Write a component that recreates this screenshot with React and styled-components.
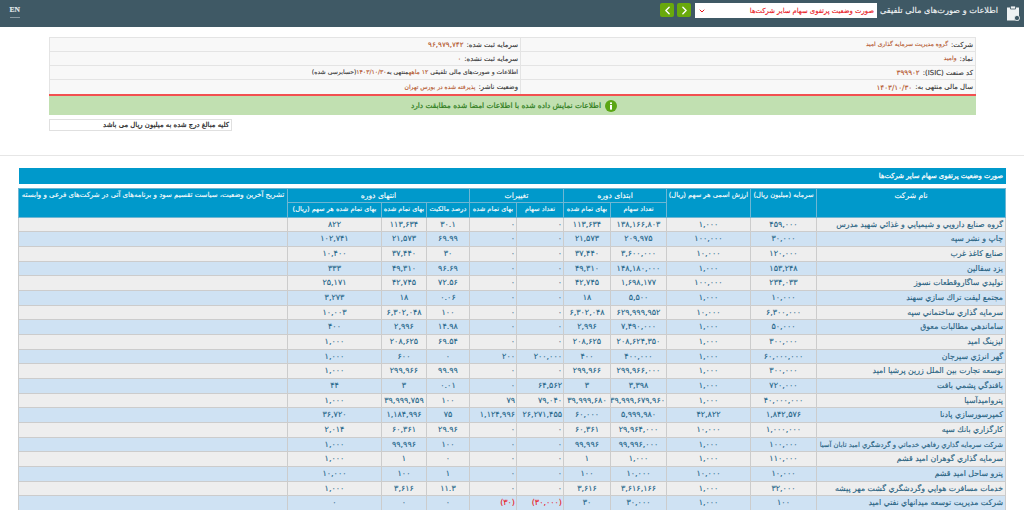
import React from "react";
import styled, { createGlobalStyle } from "styled-components";
import { ChevronLeft, ChevronRight, ChevronDown } from "lucide-react";

const FONT = `"DejaVu Sans", "Liberation Sans", sans-serif`;

const rows = [
  ["گروه صنايع دارويي و شيميايي و غذائي شهيد مدرس", "۴۵۹,۰۰۰", "۱,۰۰۰", "۱۳۸,۱۶۶,۸۰۳", "۱۱۳,۶۳۴", "۰", "۰", "۳۰.۱", "۱۱۳,۶۳۴", "۸۲۲"],
  ["چاپ و نشر سپه", "۳۰,۰۰۰", "۱۰۰,۰۰۰", "۲۰۹,۹۷۵", "۲۱,۵۷۳", "۰", "۰", "۶۹.۹۹", "۲۱,۵۷۳", "۱۰۲,۷۴۱"],
  ["صنايع كاغذ غرب", "۱۲۰,۰۰۰", "۱۰,۰۰۰", "۳,۶۰۰,۰۰۰", "۳۷,۴۴۰", "۰", "۰", "۳۰", "۳۷,۴۴۰", "۱۰,۴۰۰"],
  ["يزد سفالين", "۱۵۳,۲۴۸", "۱,۰۰۰", "۱۴۸,۱۸۰,۰۰۰", "۴۹,۳۱۰", "۰", "۰", "۹۶.۶۹", "۴۹,۳۱۰", "۳۳۳"],
  ["توليدي ساگاروقطعات نسوز", "۲۳۴,۰۳۳", "۱۰۰,۰۰۰", "۱,۶۹۸,۱۷۷", "۴۲,۷۴۵", "۰", "۰", "۷۲.۵۶", "۴۲,۷۴۵", "۲۵,۱۷۱"],
  ["مجتمع ليفت تراك سازي سهند", "۱۰,۰۰۰", "۱,۰۰۰", "۵,۵۰۰", "۱۸", "۰", "۰", "۰.۰۶", "۱۸", "۳,۲۷۳"],
  ["سرمايه گذاري ساختماني سپه", "۶,۳۰۰,۰۰۰", "۱۰,۰۰۰", "۶۲۹,۹۹۹,۹۵۲", "۶,۳۰۲,۰۴۸", "۰", "۰", "۱۰۰", "۶,۳۰۲,۰۴۸", "۱۰,۰۰۳"],
  ["ساماندهي مطالبات معوق", "۵۰,۰۰۰", "۱,۰۰۰", "۷,۴۹۰,۰۰۰", "۲,۹۹۶", "۰", "۰", "۱۴.۹۸", "۲,۹۹۶", "۴۰۰"],
  ["ليزينگ اميد", "۳۰۰,۰۰۰", "۱,۰۰۰", "۲۰۸,۶۲۴,۳۵۰", "۲۰۸,۶۲۵", "۰", "۰", "۶۹.۵۴", "۲۰۸,۶۲۵", "۱,۰۰۰"],
  ["گهر انرژي سيرجان", "۶۰,۰۰۰,۰۰۰", "۱,۰۰۰", "۴۰۰,۰۰۰", "۴۰۰", "۲۰۰,۰۰۰", "۲۰۰", "۰", "۶۰۰", "۱,۰۰۰"],
  ["توسعه تجارت بين الملل زرين پرشيا اميد", "۳۰۰,۰۰۰", "۱,۰۰۰", "۲۹۹,۹۶۶,۰۰۰", "۲۹۹,۹۶۶", "۰", "۰", "۹۹.۹۹", "۲۹۹,۹۶۶", "۱,۰۰۰"],
  ["بافندگي پشمي بافت", "۷۲۰,۰۰۰", "۱,۰۰۰", "۳,۳۹۸", "۳", "۶۴,۵۶۲", "۰", "۰.۰۱", "۳", "۴۴"],
  ["پتروامیدآسیا", "۴۰,۰۰۰,۰۰۰", "۱,۰۰۰", "۳۹,۹۹۹,۶۷۹,۹۶۰", "۳۹,۹۹۹,۶۸۰", "۷۹,۰۴۰", "۷۹", "۱۰۰", "۳۹,۹۹۹,۷۵۹", "۱,۰۰۰"],
  ["كمپرسورسازي پادنا", "۱,۸۴۲,۵۷۶", "۴۲,۸۲۲", "۵,۹۹۹,۹۸۰", "۶۰,۰۰۰", "۲۶,۲۷۱,۴۵۵", "۱,۱۲۴,۹۹۶", "۷۵", "۱,۱۸۴,۹۹۶", "۳۶,۷۲۰"],
  ["كارگزاري بانك سپه", "۱,۰۰۰,۰۰۰", "۱۰,۰۰۰", "۲۹,۹۶۴,۰۰۰", "۶۰,۳۶۱", "۰", "۰", "۲۹.۹۶", "۶۰,۳۶۱", "۲,۰۱۴"],
  ["شركت سرمايه گذاري رفاهي خدماتي و گردشگري اميد تابان آسيا", "۱۰۰,۰۰۰", "۱,۰۰۰", "۹۹,۹۹۶,۰۰۰", "۹۹,۹۹۶", "۰", "۰", "۱۰۰", "۹۹,۹۹۶", "۱,۰۰۰"],
  ["سرمايه گذاري گوهران اميد قشم", "۱۱۰,۰۰۰", "۱,۰۰۰", "۱,۰۰۰", "۱", "۰", "۰", "۰", "۱", "۱,۰۰۰"],
  ["پترو ساحل اميد قشم", "۱۰,۰۰۰", "۱۰,۰۰۰", "۱۰,۰۰۰", "۱۰۰", "۰", "۰", "۱", "۱۰۰", "۱۰,۰۰۰"],
  ["خدمات مسافرت هوايي وگردشگري گشت مهر پيشه", "۳۲,۰۰۰", "۱,۰۰۰", "۳,۶۱۶,۱۶۶", "۳,۶۱۶", "۰", "۰", "۱۱.۳", "۳,۶۱۶", "۱,۰۰۰"],
  ["شركت مديريت توسعه ميدانهاي نفتي اميد", "۱۰۰", "۱,۰۰۰", "۳۰,۰۰۰", "۳۰", "(۳۰,۰۰۰)", "(۳۰)", "۰", "۰", "۰"],
];

const colWidths = [189, 66, 84, 56, 47, 47, 47, 43, 45, 94, 269];

const App = () => {
  return (
    <>
      <GlobalStyle />
      <TopBar>
        <ClipboardIcon viewBox="0 0 14 16">
          <path d="M1 2.5h12v13H1z" fill="#eef2f3" />
          <path d="M4.5 1h5v3h-5z" fill="#eef2f3" stroke="#3f5965" strokeWidth="0.8" />
          <circle cx="11" cy="13" r="2.6" fill="#3f5965" stroke="#eef2f3" strokeWidth="0.8" />
        </ClipboardIcon>
        <PageTitle>اطلاعات و صورت‌های مالی تلفیقی</PageTitle>
        <ReportSelect>
          <span>صورت وضعیت پرتفوی سهام سایر شرکت‌ها</span>
          <ChevronDown size={8} strokeWidth={3} color="#e8141c" />
        </ReportSelect>
        <NavButtons>
          <NavButton>
            <ChevronRight size={13} strokeWidth={2.6} />
          </NavButton>
          <NavButton>
            <ChevronLeft size={13} strokeWidth={2.6} />
          </NavButton>
        </NavButtons>
        <LangLink>EN</LangLink>
      </TopBar>

      <InfoTable>
        <InfoRow>
          <InfoCell>
            <Label>شرکت:</Label>
            <Value>گروه مدیریت سرمایه گذاری امید</Value>
          </InfoCell>
          <InfoCell>
            <Label>سرمایه ثبت شده:</Label>
            <Value $digits>۹۶,۹۷۹,۷۴۲</Value>
          </InfoCell>
        </InfoRow>
        <InfoRow>
          <InfoCell>
            <Label>نماد:</Label>
            <Value>وامید</Value>
          </InfoCell>
          <InfoCell>
            <Label>سرمایه ثبت نشده:</Label>
            <Value $digits>۰</Value>
          </InfoCell>
        </InfoRow>
        <InfoRow>
          <InfoCell>
            <Label>کد صنعت (ISIC):</Label>
            <Value $digits>۳۹۹۹۰۲</Value>
          </InfoCell>
          <InfoCell>
            <SmallNote>
              اطلاعات و صورت‌های مالی تلفیقی <em>۱۲ ماهه</em>منتهی به<em>۱۴۰۳/۱۰/۳۰</em>(حسابرسی شده)
            </SmallNote>
          </InfoCell>
        </InfoRow>
        <InfoRow>
          <InfoCell>
            <Label>سال مالی منتهی به:</Label>
            <Value $digits>۱۴۰۳/۱۰/۳۰</Value>
          </InfoCell>
          <InfoCell>
            <Label>وضعیت ناشر:</Label>
            <Value>پذیرفته شده در بورس تهران</Value>
          </InfoCell>
        </InfoRow>
        <Notice>
          <InfoIcon viewBox="0 0 12 12">
            <circle cx="6" cy="6" r="6" fill="#5aa614" />
            <rect x="5" y="5" width="2" height="4.6" fill="#fff" />
            <rect x="5" y="2.4" width="2" height="1.7" fill="#fff" />
          </InfoIcon>
          <span>اطلاعات نمایش داده شده با اطلاعات امضا شده مطابقت دارد</span>
        </Notice>
      </InfoTable>

      <AmountsNote>
        <span>کلیه مبالغ درج شده به میلیون ریال می باشد</span>
      </AmountsNote>

      <Divider />

      <Section>
        <SectionTitle>صورت وضعیت پرتفوی سهام سایر شرکت‌ها</SectionTitle>
        <Table>
          <colgroup>
            {colWidths.map((w, i) => (
              <col key={i} style={{ width: w }} />
            ))}
          </colgroup>
          <thead>
            <tr>
              <Th rowSpan={2}>نام شرکت</Th>
              <LongTh rowSpan={2}>سرمایه (میلیون ریال)</LongTh>
              <LongTh rowSpan={2}>ارزش اسمی هر سهم (ریال)</LongTh>
              <Th colSpan={2}>ابتدای دوره</Th>
              <Th colSpan={2}>تغییرات</Th>
              <Th colSpan={3}>انتهای دوره</Th>
              <Th rowSpan={2} $size="7px">تشریح آخرین وضعیت، سیاست تقسیم سود و برنامه‌های آتی در شرکت‌های فرعی و وابسته</Th>
            </tr>
            <tr>
              <SubTh>تعداد سهام</SubTh>
              <SubTh>بهای تمام شده</SubTh>
              <SubTh>تعداد سهام</SubTh>
              <SubTh>بهای تمام شده</SubTh>
              <SubTh>درصد مالکیت</SubTh>
              <SubTh>بهای تمام شده</SubTh>
              <SubTh>بهای تمام شده هر سهم (ریال)</SubTh>
            </tr>
          </thead>
          <tbody>
            {rows.map((row, i) => (
              <Row key={i}>
                <NameCell $long={row[0].length > 50}>{row[0]}</NameCell>
                {row.slice(1).map((val, j) => (
                  <Cell key={j} $end={j === 4 || j === 5} $negative={val.startsWith("(")}>
                    {val}
                  </Cell>
                ))}
                <Cell />
              </Row>
            ))}
          </tbody>
        </Table>
      </Section>
    </>
  );
};

const GlobalStyle = createGlobalStyle`
  html, body {
    margin: 0;
    height: 510px;
    overflow: hidden;
    background: #ffffff;
    font-family: ${FONT};
    text-rendering: geometricPrecision;
    -webkit-text-stroke-width: 0.12px;
  }
`;

const TopBar = styled.header`
  direction: rtl;
  display: flex;
  align-items: flex-start;
  height: 27px;
  padding: 3px 4px 0 10px;
  box-sizing: border-box;
  background: #3f5965;
`;

const ClipboardIcon = styled.svg`
  width: 14px;
  height: 16px;
  margin-top: 2px;
`;

const PageTitle = styled.div`
  margin: 2px 8px 0 6px;
  width: 115px;
  color: #f2f5f6;
  font-size: 8.2px;
  line-height: 11px;
  white-space: nowrap;
`;

const ReportSelect = styled.div`
  display: flex;
  align-items: center;
  justify-content: space-between;
  width: 182px;
  height: 15px;
  padding: 0 3px;
  box-sizing: border-box;
  background: #ffffff;
  color: #e8141c;
  font-size: 6.8px;
  white-space: nowrap;
`;

const NavButtons = styled.div`
  display: flex;
  gap: 3px;
  margin-right: 4px;
`;

const NavButton = styled.button`
  display: flex;
  align-items: center;
  justify-content: center;
  width: 14px;
  height: 14px;
  padding: 0;
  border: none;
  border-radius: 2px;
  background: #69a90c;
  color: #ffffff;
`;

const LangLink = styled.a`
  margin-right: auto;
  margin-top: 3px;
  padding-bottom: 3px;
  width: 10px;
  height: 8px;
  border-bottom: 1px solid #8a9aa2;
  color: #e6ecee;
  font-family: "Liberation Serif", serif;
  font-size: 7.5px;
  font-weight: bold;
  line-height: 8px;
`;

const InfoTable = styled.section`
  direction: rtl;
  width: 927px;
  margin: 10px 0 0 49px;
`;

const InfoRow = styled.div`
  display: grid;
  grid-template-columns: 454px 1fr;
  height: 14px;
  box-sizing: border-box;
  background: #f8f8f8;
  border: 1px solid #e4e4e4;
  border-bottom: none;

  &:nth-child(4) {
    height: 15px;
  }
`;

const InfoCell = styled.div`
  display: flex;
  align-items: center;
  gap: 3px;
  padding-right: 2px;
  white-space: nowrap;

  & + & {
    border-right: 1px solid #e4e4e4;
  }
`;

const Label = styled.span`
  color: #333333;
  font-size: 6.9px;
`;

const Value = styled.span`
  color: #b4562c;
  font-size: ${(p) => (p.$digits ? "7.2px" : "6px")};
`;

const SmallNote = styled.span`
  color: #333333;
  font-size: 6.1px;

  em {
    font-style: normal;
    color: #b4562c;
  }
`;

const Notice = styled.div`
  display: flex;
  align-items: center;
  gap: 4px;
  height: 21px;
  padding-right: 359px;
  box-sizing: border-box;
  border-top: 2px solid #f25050;
  background: #c1e0b1;
  color: #2f7d1d;
  font-size: 7.4px;
  -webkit-text-stroke-width: 0.22px;
  white-space: nowrap;
`;

const InfoIcon = styled.svg`
  width: 12px;
  height: 12px;
`;

const AmountsNote = styled.div`
  direction: rtl;
  width: 183px;
  height: 12px;
  margin: 4px 0 0 49px;
  padding-right: 2px;
  box-sizing: border-box;
  border: 1px solid #e0e0e0;
  color: #222222;
  font-size: 6.9px;
  -webkit-text-stroke-width: 0.22px;
  line-height: 10px;
  white-space: nowrap;
`;

const Divider = styled.hr`
  height: 1px;
  margin: 24px 0 0;
  border: none;
  background: #e6e6e6;
`;

const Section = styled.section`
  direction: rtl;
  width: 987px;
  margin: 12px 0 0 19px;
`;

const SectionTitle = styled.h2`
  height: 16px;
  margin: 0 0 4px;
  padding-right: 3px;
  background: #0099cb;
  color: #ffffff;
  font-size: 6.8px;
  font-weight: normal;
  -webkit-text-stroke-width: 0.25px;
  line-height: 16px;
  white-space: nowrap;
`;

const Table = styled.table`
  width: 987px;
  table-layout: fixed;
  border-collapse: collapse;
`;

const Th = styled.th`
  height: 13px;
  padding: 0;
  vertical-align: top;
  border: 1px solid #6fb6d3;
  background: #0099cb;
  color: #ffffff;
  font-size: ${(p) => p.$size || "7.6px"};
  font-weight: normal;
  line-height: 13px;
  white-space: nowrap;
  overflow: hidden;
`;

const LongTh = styled(Th)`
  font-size: 6.7px;
`;

const SubTh = styled(Th)`
  height: 14px;
  font-size: 6.6px;
`;

const Row = styled.tr`
  height: 15px;

  &:nth-child(3n + 1) {
    height: 14px;
  }
  &:nth-child(odd) td {
    background: #eeeeee;
  }
  &:nth-child(even) td {
    background: #cfe2f3;
  }
`;

const Cell = styled.td`
  padding: 0 1px;
  border: 1px solid #cccccc;
  border-top: none;
  color: ${(p) => (p.$negative ? "#e8141c" : "#24668a")};
  font-size: 8px;
  line-height: 12px;
  text-align: ${(p) => (p.$end ? "right" : "center")};
  white-space: nowrap;
  overflow: hidden;
`;

const NameCell = styled(Cell)`
  padding-right: 2px;
  text-align: right;
  color: #24607f;
  font-size: ${(p) => (p.$long ? "6.8px" : "7.8px")};
`;

export default App;
